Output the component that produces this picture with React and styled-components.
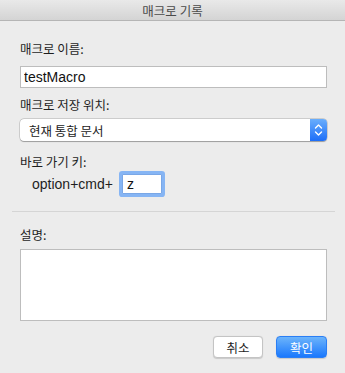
import React, { useState } from 'react';
import styled, { createGlobalStyle } from 'styled-components';

const GlobalStyle = createGlobalStyle`
	html, body {
		margin: 0;
		padding: 0;
		background: #ececec;
	}
	body {
		font-family: "Liberation Sans", "Noto Sans CJK KR", sans-serif;
		-webkit-font-smoothing: antialiased;
	}
`;

const StyledWindow = styled.div`
	width: 345px;
	height: 373px;
	display: flex;
	flex-direction: column;
	background: #ececec;
	overflow: hidden;
`;

const StyledTitleBar = styled.div`
	height: 20px;
	flex: 0 0 auto;
	display: flex;
	align-items: center;
	justify-content: center;
	background: linear-gradient(#e9e9e9, #d4d4d4);
	border-bottom: 1px solid #b5b5b5;
	color: #4a4a4a;
	font-family: "Noto Sans CJK KR", sans-serif;
	font-size: 12.5px;
`;

const StyledSection = styled.div`
	display: flex;
	flex-direction: column;
	padding: 0 18px 0 20px;
`;

const StyledLabel = styled.div`
	height: 16px;
	line-height: 16px;
	margin-top: ${(p) => p.$mt}px;
	color: #1e1e1e;
	font-family: "Noto Sans CJK KR", sans-serif;
	font-size: 12.5px;
`;

const StyledTextField = styled.input`
	box-sizing: border-box;
	height: 22px;
	margin-top: ${(p) => p.$mt}px;
	padding: 0 3px;
	border: 1px solid #bdbdbd;
	background: #fff;
	color: #111;
	font-family: "Liberation Sans", sans-serif;
	font-size: 14px;
	outline: none;
`;

const StyledSelect = styled.div`
	box-sizing: border-box;
	height: 22px;
	margin-top: ${(p) => p.$mt}px;
	display: flex;
	align-items: stretch;
	background: #fff;
	border-radius: 4px;
	box-shadow: 0 0 0 0.5px rgba(0, 0, 0, 0.22), 0 0.5px 1px rgba(0, 0, 0, 0.25);
	overflow: hidden;
`;

const StyledSelectValue = styled.span`
	flex: 1;
	display: flex;
	align-items: center;
	padding-left: 9px;
	color: #222;
	font-family: "Noto Sans CJK KR", sans-serif;
	font-size: 12.5px;
`;

const StyledStepper = styled.span`
	width: 17px;
	display: flex;
	align-items: center;
	justify-content: center;
	background: linear-gradient(#6aaefc, #1d6ef8);
`;

const StyledShortcutRow = styled.div`
	display: flex;
	align-items: center;
	height: 26px;
	margin-top: 1px;
	padding-left: 12px;
	gap: 9px;
	font-size: 14px;
	color: #1e1e1e;
`;

const StyledKeyField = styled.input`
	box-sizing: border-box;
	width: 40px;
	height: 20px;
	margin-left: 0;
	padding: 0 4px;
	border: 1px solid #7aa7e6;
	box-shadow: 0 0 0 3px #86b5f4;
	border-radius: 1px;
	background: #fff;
	font-family: "Liberation Sans", sans-serif;
	font-size: 14px;
	color: #111;
	outline: none;
`;

const StyledSeparator = styled.div`
	height: 1px;
	margin: 14px 10px 0 12px;
	background: #d5d5d5;
`;

const StyledTextArea = styled.textarea`
	box-sizing: border-box;
	height: 72px;
	margin-top: ${(p) => p.$mt}px;
	border: 1px solid #bdbdbd;
	background: #fff;
	resize: none;
	outline: none;
`;

const StyledButtonRow = styled.div`
	display: flex;
	justify-content: flex-end;
	gap: 13px;
	margin-top: 15px;
`;

const StyledButton = styled.button`
	box-sizing: border-box;
	width: ${(p) => p.$w}px;
	height: 22px;
	padding: 0;
	border-radius: 4px;
	font-family: "Noto Sans CJK KR", sans-serif;
	font-size: 12.5px;
	border: ${(p) => (p.$primary ? '1px solid #2a7ef5' : '1px solid #c4c4c4')};
	background: ${(p) => (p.$primary ? 'linear-gradient(#6cb4fb, #1a78fd)' : '#fff')};
	color: ${(p) => (p.$primary ? '#fff' : '#1e1e1e')};
	box-shadow: 0 0.5px 1px rgba(0, 0, 0, 0.15);
`;

function Stepper() {
	return (
		<svg width="9" height="14" viewBox="0 0 9 14">
			<path d="M1.5 5 L4.5 2 L7.5 5" fill="none" stroke="#fff" strokeWidth="1.4" strokeLinecap="round" strokeLinejoin="round" />
			<path d="M1.5 9 L4.5 12 L7.5 9" fill="none" stroke="#fff" strokeWidth="1.4" strokeLinecap="round" strokeLinejoin="round" />
		</svg>
	);
}

export default function App() {
	const [name, setName] = useState('testMacro');
	const [key, setKey] = useState('z');
	return (
		<>
			<GlobalStyle />
			<StyledWindow>
				<StyledTitleBar>매크로 기록</StyledTitleBar>
				<StyledSection>
					<StyledLabel $mt={20}>매크로 이름:</StyledLabel>
					<StyledTextField $mt={9} value={name} onChange={(e) => setName(e.target.value)} />
					<StyledLabel $mt={9}>매크로 저장 위치:</StyledLabel>
					<StyledSelect $mt={6}>
						<StyledSelectValue>현재 통합 문서</StyledSelectValue>
						<StyledStepper>
							<Stepper />
						</StyledStepper>
					</StyledSelect>
					<StyledLabel $mt={13}>바로 가기 키:</StyledLabel>
					<StyledShortcutRow>
						<span>option+cmd+</span>
						<StyledKeyField value={key} onChange={(e) => setKey(e.target.value)} />
					</StyledShortcutRow>
				</StyledSection>
				<StyledSeparator />
				<StyledSection>
					<StyledLabel $mt={15}>설명:</StyledLabel>
					<StyledTextArea $mt={6} />
					<StyledButtonRow>
						<StyledButton $w={50}>취소</StyledButton>
						<StyledButton $w={51} $primary>확인</StyledButton>
					</StyledButtonRow>
				</StyledSection>
			</StyledWindow>
		</>
	);
}
